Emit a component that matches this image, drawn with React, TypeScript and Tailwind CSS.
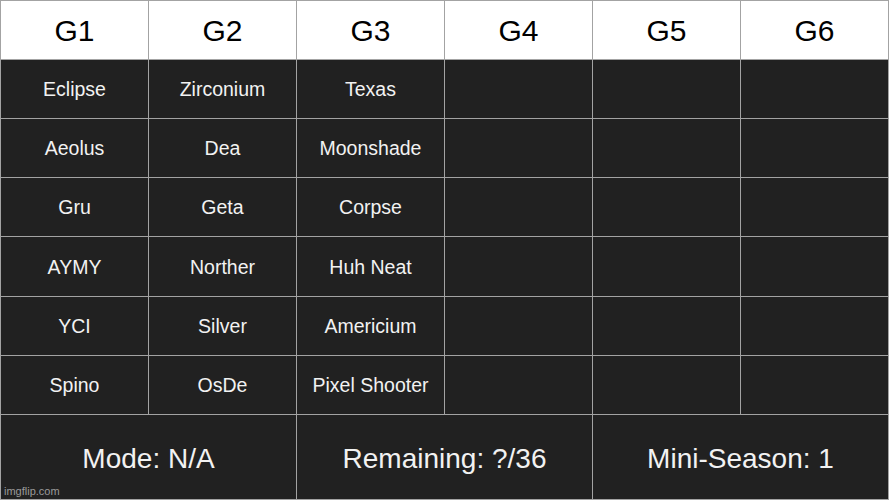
const headers = ['G1', 'G2', 'G3', 'G4', 'G5', 'G6']

const rows = [
  ['Eclipse', 'Zirconium', 'Texas'],
  ['Aeolus', 'Dea', 'Moonshade'],
  ['Gru', 'Geta', 'Corpse'],
  ['AYMY', 'Norther', 'Huh Neat'],
  ['YCI', 'Silver', 'Americium'],
  ['Spino', 'OsDe', 'Pixel Shooter'],
]

const footer = ['Mode: N/A', 'Remaining: ?/36', 'Mini-Season: 1']

export default function App() {
  return (
    <div className="relative w-[889px] h-[500px] overflow-hidden" style={{ fontFamily: '"Liberation Sans", Arial, sans-serif' }}>
      <div className="grid grid-cols-6 grid-rows-[58px_58px_58px_58px_59px_58px_58px_84px] gap-px p-px w-full h-full bg-[#a3a3a3]">
        {headers.map((h) => (
          <div key={h} className="bg-white text-black text-[30px] flex items-center justify-center">
            {h}
          </div>
        ))}
        {rows.map((r, i) =>
          [0, 1, 2, 3, 4, 5].map((c) => (
            <div key={i + '-' + c} className="bg-[#212121] text-[#f2f2f2] text-[19.5px] flex items-center justify-center pt-[2px]">
              {r[c] ?? ''}
            </div>
          ))
        )}
        {footer.map((f) => (
          <div key={f} className="col-span-2 bg-[#212121] text-[#f2f2f2] text-[28px] flex items-center justify-center pt-1">
            {f}
          </div>
        ))}
      </div>
      <span className="absolute left-[4px] bottom-[1px] text-[11px] text-[#9a9a9a]">imgflip.com</span>
    </div>
  )
}
